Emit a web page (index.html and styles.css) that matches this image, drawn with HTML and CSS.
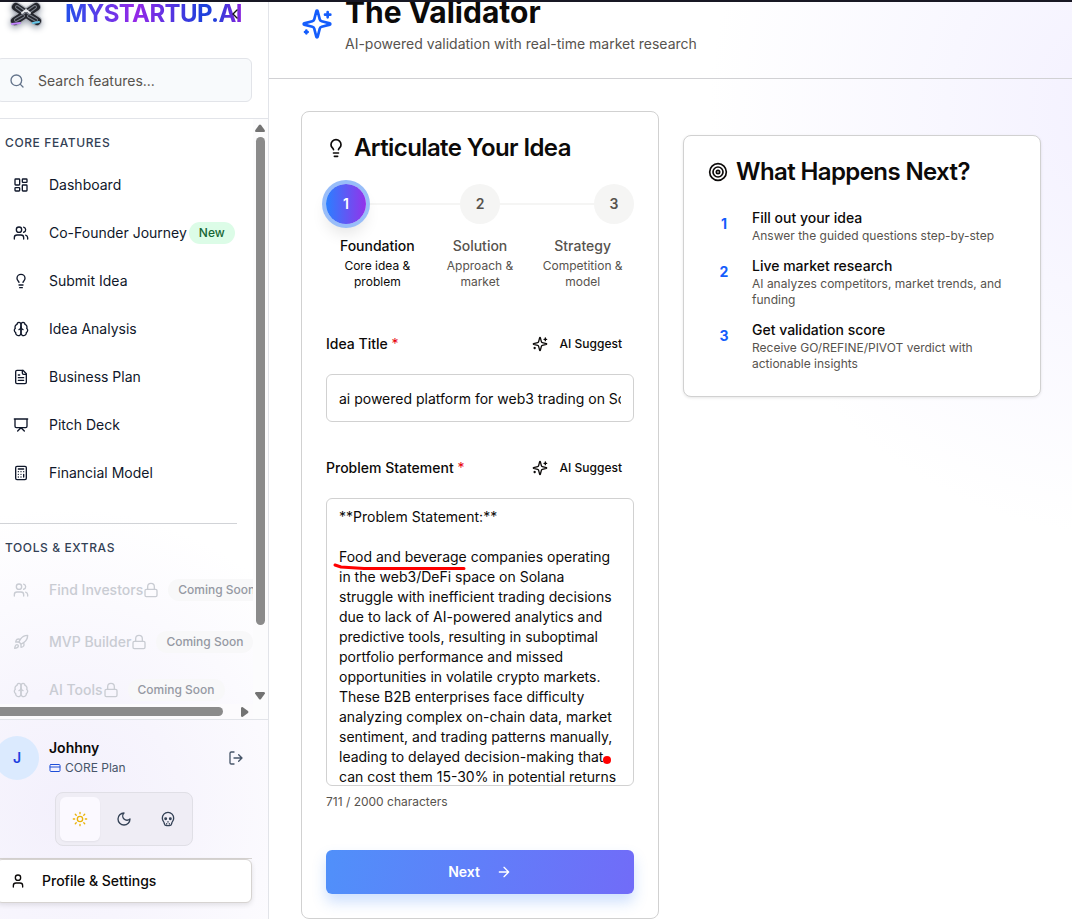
FILE: index.html
```html
<!DOCTYPE html>
<html lang="en">
<head>
<meta charset="utf-8">
<title>The Validator</title>
<link rel="stylesheet" href="styles.css">
</head>
<body>
<svg class="sprite" aria-hidden="true">
  <symbol id="users" viewBox="0 0 24 24"><path d="M16 21v-2a4 4 0 0 0-4-4H6a4 4 0 0 0-4 4v2"/><circle cx="9" cy="7" r="4"/><path d="M22 21v-2a4 4 0 0 0-3-3.87M16 3.13a4 4 0 0 1 0 7.75"/></symbol>
  <symbol id="bulb" viewBox="0 0 24 24"><path d="M15 14c.2-1 .7-1.7 1.5-2.5 1-.9 1.5-2.2 1.5-3.5A6 6 0 0 0 6 8c0 1 .2 2.2 1.5 3.5.7.7 1.3 1.5 1.5 2.5M9 18h6M10 22h4"/></symbol>
  <symbol id="brain" viewBox="0 0 24 24"><path d="M12 5a3 3 0 1 0-5.997.125 4 4 0 0 0-2.526 5.77 4 4 0 0 0 .556 6.588A4 4 0 1 0 12 18Z"/><path d="M12 5a3 3 0 1 1 5.997.125 4 4 0 0 1 2.526 5.77 4 4 0 0 1-.556 6.588A4 4 0 1 1 12 18Z"/><path d="M15 13a4.5 4.5 0 0 1-3-4 4.5 4.5 0 0 1-3 4"/></symbol>
  <symbol id="lock" viewBox="0 0 24 24"><rect x="3" y="11" width="18" height="11" rx="2"/><path d="M7 11V7a5 5 0 0 1 10 0v4"/></symbol>
  <symbol id="sparkles" viewBox="0 0 24 24"><path d="M9.937 15.5A2 2 0 0 0 8.5 14.063l-6.135-1.582a.5.5 0 0 1 0-.962L8.5 9.936A2 2 0 0 0 9.937 8.5l1.582-6.135a.5.5 0 0 1 .963 0L14.063 8.5A2 2 0 0 0 15.5 9.937l6.135 1.581a.5.5 0 0 1 0 .964L15.5 14.063a2 2 0 0 0-1.437 1.437l-1.582 6.135a.5.5 0 0 1-.963 0z"/><path d="M20 3v4M22 5h-4M4 17v2M5 18H3"/></symbol>
</svg>
<div class="window-edge"></div>
<div class="app">
  <aside class="sidebar">
    <div class="sidebar-top">
      <div class="brand">
        <svg class="brand-mark" viewBox="0 0 40 32" aria-hidden="true">
          <g fill="none" stroke-linecap="round">
            <path d="M10 7 31 21M30 7 9 21" stroke="#a9adb5" stroke-width="10"/>
            <path d="M10 7 31 21M30 7 9 21" stroke="#24262d" stroke-width="8"/>
            <path d="M11 7 18 12M29 7 22 12M10 20l7-4M30 20l-7-4" stroke="#777d88" stroke-width="4"/>
            <path d="M11 7 18 12M29 7 22 12M10 20l7-4M30 20l-7-4" stroke="#24262d" stroke-width="2"/>
            <path d="m6 24 8-1" stroke="#c084fc" stroke-width="2"/><path d="m27 23 6-1" stroke="#67c7e8" stroke-width="2"/>
            <path d="m16 13 4-3 4 3" stroke="#e5e7eb" stroke-width="2"/>
          </g>
        </svg>
        <span class="brand-name">MYSTARTUP.AI</span>
        <button class="collapse" aria-label="Collapse sidebar"><svg class="icon" viewBox="0 0 24 24"><path d="m15 18-6-6 6-6"/></svg></button>
      </div>
      <label class="search">
        <svg class="icon" viewBox="0 0 24 24"><circle cx="11" cy="11" r="8"/><path d="m21 21-4.3-4.3"/></svg>
        <input type="text" placeholder="Search features..." aria-label="Search features">
      </label>
    </div>
    <div class="nav-pane">
      <nav class="nav">
        <h2 class="nav-heading">CORE FEATURES</h2>
        <a class="nav-link" href="#"><svg class="icon" viewBox="0 0 24 24"><rect x="3" y="3" width="7" height="9" rx="1"/><rect x="14" y="3" width="7" height="5" rx="1"/><rect x="14" y="12" width="7" height="9" rx="1"/><rect x="3" y="16" width="7" height="5" rx="1"/></svg><span>Dashboard</span></a>
        <a class="nav-link" href="#"><svg class="icon"><use href="#users"/></svg><span>Co-Founder Journey</span><span class="pill pill-new">New</span></a>
        <a class="nav-link" href="#"><svg class="icon"><use href="#bulb"/></svg><span>Submit Idea</span></a>
        <a class="nav-link" href="#"><svg class="icon"><use href="#brain"/></svg><span>Idea Analysis</span></a>
        <a class="nav-link" href="#"><svg class="icon" viewBox="0 0 24 24"><path d="M15 2H6a2 2 0 0 0-2 2v16a2 2 0 0 0 2 2h12a2 2 0 0 0 2-2V7Z"/><path d="M14 2v4a2 2 0 0 0 2 2h4M10 9H8M16 13H8M16 17H8"/></svg><span>Business Plan</span></a>
        <a class="nav-link" href="#"><svg class="icon" viewBox="0 0 24 24"><path d="M2 3h20M21 3v11a2 2 0 0 1-2 2H5a2 2 0 0 1-2-2V3M7 21l5-5 5 5"/></svg><span>Pitch Deck</span></a>
        <a class="nav-link" href="#"><svg class="icon" viewBox="0 0 24 24"><rect x="4" y="2" width="16" height="20" rx="2"/><path d="M8 6h8M16 14v4M16 10h.01M12 10h.01M8 10h.01M12 14h.01M8 14h.01M12 18h.01M8 18h.01"/></svg><span>Financial Model</span></a>
        <hr class="nav-rule">
        <h2 class="nav-heading">TOOLS &amp; EXTRAS</h2>
        <a class="nav-link locked" href="#"><svg class="icon"><use href="#users"/></svg><span>Find Investors</span><svg class="icon"><use href="#lock"/></svg><span class="pill">Coming Soon</span></a>
        <a class="nav-link locked" href="#"><svg class="icon" viewBox="0 0 24 24"><path d="M4.5 16.5c-1.5 1.26-2 5-2 5s3.74-.5 5-2c.71-.84.7-2.13-.09-2.91a2.18 2.18 0 0 0-2.91-.09zM12 15l-3-3a22 22 0 0 1 2-3.950A12.880 12.880 0 0 1 22 2c0 2.720-.78 7.500-6 11a22.350 22.350 0 0 1-4 2z"/><path d="M9 12H4s.55-3.030 2-4c1.620-1.080 5 0 5 0M12 15v5s3.030-.55 4-2c1.080-1.620 0-5 0-5"/></svg><span>MVP Builder</span><svg class="icon"><use href="#lock"/></svg><span class="pill">Coming Soon</span></a>
        <a class="nav-link locked" href="#"><svg class="icon"><use href="#brain"/></svg><span>AI Tools</span><svg class="icon"><use href="#lock"/></svg><span class="pill">Coming Soon</span></a>
      </nav>
      <div class="bar-y" aria-hidden="true">
        <svg class="arrow" viewBox="0 0 10 8"><path d="M4 1Q5 0 6 1L10 6.500Q10 8 9 8H1Q0 8 0 6.500Z"/></svg><span class="thumb-y"></span><span class="gap-y"></span><svg class="arrow" viewBox="0 0 10 8"><path d="M4 7Q5 8 6 7L10 1.500Q10 0 9 0H1Q0 0 0 1.500Z"/></svg>
      </div>
      <div class="bar-x" aria-hidden="true">
        <span class="thumb-x"></span><svg class="arrow-x" viewBox="0 0 8 10"><path d="M7 4Q8 5 7 6L1.500 10Q0 10 0 9V1Q0 0 1.500 0Z"/></svg>
      </div>
    </div>
    <div class="account">
      <div class="user">
        <span class="avatar">J</span>
        <div class="user-text">
          <div class="user-name">Johhny</div>
          <div class="user-plan"><svg class="icon" viewBox="0 0 24 24"><rect x="2" y="5" width="20" height="14" rx="2"/><path d="M2 10h20"/></svg>CORE Plan</div>
        </div>
        <button class="logout" aria-label="Log out"><svg class="icon" viewBox="0 0 24 24"><path d="M9 21H5a2 2 0 0 1-2-2V5a2 2 0 0 1 2-2h4M16 17l5-5-5-5M21 12H9"/></svg></button>
      </div>
      <div class="themes">
        <button class="theme active" aria-label="Light"><svg class="icon" viewBox="0 0 24 24"><circle cx="12" cy="12" r="4"/><path d="M12 2v2M12 20v2M4.930 4.930l1.410 1.410M17.660 17.660l1.410 1.410M2 12h2M20 12h2M6.340 17.660l-1.410 1.410M19.070 4.930l-1.410 1.410"/></svg></button>
        <button class="theme" aria-label="Dark"><svg class="icon" viewBox="0 0 24 24"><path d="M12 3a6 6 0 0 0 9 9 9 9 0 1 1-9-9Z"/></svg></button>
        <button class="theme" aria-label="Skull"><svg class="icon" viewBox="0 0 24 24"><path d="M12 2a8.500 8.500 0 0 0-8.500 9c0 2 .5 3.600 1.800 5 .9 1 1 2 1.300 3.300C7 21.300 8.300 22 10 22h4c1.700 0 3-.7 3.400-2.700.3-1.300.4-2.300 1.300-3.300 1.300-1.400 1.800-3 1.800-5A8.500 8.500 0 0 0 12 2Z"/><circle cx="8.500" cy="11.500" r="1.200"/><circle cx="15.500" cy="11.500" r="1.200"/><path d="M12 16v.5M10 19v.5M14 19v.5"/></svg></button>
      </div>
      <div class="profile-row">
        <button class="profile"><svg class="icon" viewBox="0 0 24 24"><path d="M19 21v-2a4 4 0 0 0-4-4H9a4 4 0 0 0-4 4v2"/><circle cx="12" cy="7" r="4"/></svg>Profile &amp; Settings</button>
      </div>
    </div>
  </aside>
  <main class="main">
    <header class="page-head">
      <svg class="icon head-icon"><use href="#sparkles"/></svg>
      <div>
        <h1 class="title">The Validator</h1>
        <p class="subtitle">AI-powered validation with real-time market research</p>
      </div>
    </header>
    <div class="columns">
      <form class="card idea">
        <h2 class="card-title"><svg class="icon"><use href="#bulb"/></svg>Articulate Your Idea</h2>
        <div class="steps">
          <span class="dot current">1</span><span class="line"></span><span class="dot">2</span><span class="line"></span><span class="dot">3</span>
        </div>
        <div class="step-names">
          <div class="step-name current"><strong>Foundation</strong><span>Core idea &amp; problem</span></div>
          <div class="step-name"><strong>Solution</strong><span>Approach &amp; market</span></div>
          <div class="step-name"><strong>Strategy</strong><span>Competition &amp; model</span></div>
        </div>
        <div class="field-head">
          <label for="idea-title">Idea Title <span class="req">*</span></label>
          <button type="button" class="suggest"><svg class="icon"><use href="#sparkles"/></svg>AI Suggest</button>
        </div>
        <input class="control" id="idea-title" type="text" value="ai powered platform for web3 trading on Solana">
        <div class="field-head second">
          <label for="problem">Problem Statement <span class="req">*</span></label>
          <button type="button" class="suggest"><svg class="icon"><use href="#sparkles"/></svg>AI Suggest</button>
        </div>
        <div class="problem-wrap">
          <textarea class="control area" id="problem" spellcheck="false">**Problem Statement:**

Food and beverage companies operating in the web3/DeFi space on Solana struggle with inefficient trading decisions due to lack of AI-powered analytics and predictive tools, resulting in suboptimal portfolio performance and missed opportunities in volatile crypto markets. These B2B enterprises face difficulty analyzing complex on-chain data, market sentiment, and trading patterns manually, leading to delayed decision-making that can cost them 15-30% in potential returns</textarea>
          <svg class="marks" viewBox="0 0 308 288" aria-hidden="true"><path d="M9 67 15 69 38 70.500H138" fill="none" stroke="#f00" stroke-width="3" stroke-linecap="round" stroke-linejoin="round"/><circle cx="281" cy="262" r="4" fill="#f00"/></svg>
        </div>
        <p class="count">711 / 2000 characters</p>
        <button type="button" class="next">Next<svg class="icon" viewBox="0 0 24 24"><path d="M5 12h14M12 5l7 7-7 7"/></svg></button>
      </form>
      <section class="card after">
        <h2 class="card-title"><svg class="icon" viewBox="0 0 24 24"><circle cx="12" cy="12" r="10"/><circle cx="12" cy="12" r="6"/><circle cx="12" cy="12" r="2"/></svg>What Happens Next?</h2>
        <ol class="todo">
          <li><span class="num">1</span><div><strong>Fill out your idea</strong><p>Answer the guided questions step-by-step</p></div></li>
          <li><span class="num">2</span><div><strong>Live market research</strong><p>AI analyzes competitors, market trends, and funding</p></div></li>
          <li><span class="num">3</span><div><strong>Get validation score</strong><p>Receive GO/REFINE/PIVOT verdict with actionable insights</p></div></li>
        </ol>
      </section>
    </div>
  </main>
</div>
</body>
</html>
```
FILE: styles.css
```css
* { box-sizing: border-box; margin: 0; }
body {
  font: 14px/20px Inter, "Liberation Sans", sans-serif;
  color: #0c0a09;
  background: #fff;
  overflow: hidden;
}
button, input, textarea { font: inherit; color: inherit; }
button { border: 0; padding: 0; background: none; display: flex; align-items: center; justify-content: center; }
a { color: inherit; text-decoration: none; }
.sprite { position: absolute; width: 0; height: 0; }
.icon { width: 16px; height: 16px; flex: none; fill: none; stroke: currentColor; stroke-width: 2; stroke-linecap: round; stroke-linejoin: round; }
.window-edge { position: fixed; inset: 0 0 auto; height: 2px; background: #181824; z-index: 5; }
.app { display: grid; grid-template-columns: 269px minmax(0, 1fr); height: 100vh; }

/* Sidebar */
.sidebar {
  margin-left: -20px;
  min-height: 0;
  display: flex;
  flex-direction: column;
  border-right: 1px solid #e2e4e9;
  background: radial-gradient(circle at 30% 88%, #f3f0fc 0, #f7f5fd 14%, #fff 36%);
}
.sidebar-top { padding: 0 16px 16px; border-bottom: 1px solid #e2e4e9; }
.brand { height: 58px; display: flex; align-items: flex-start; position: relative; }
.brand-mark { width: 42px; height: 32px; margin: 0 18px 0 9px; filter: drop-shadow(0 2px 3px #9ca3af); }
.brand-name {
  font-size: 24px; line-height: 28px; font-weight: 700; letter-spacing: -0.025em;
  color: transparent;
  background: linear-gradient(90deg, #2350ea, #9528e8 40%, #1d40dc 78%, #2440dc 85%, #8b22dc);
  -webkit-background-clip: text; background-clip: text;
}
.collapse { position: absolute; right: 9px; top: 6px; color: #111; }
.search {
  display: flex; align-items: center; gap: 13px; height: 44px; padding: 1px 12px 0;
  border: 1px solid #e2e4e9; border-radius: 6px; background: #f8fafc; color: #64748b;
}
.search input { flex: 1; min-width: 0; border: 0; padding: 0; background: none; outline: 0; }
.search input::placeholder { color: #57534e; opacity: 1; }
.nav-pane { flex: 1; min-height: 0; display: grid; grid-template: minmax(0, 1fr) 15px / minmax(0, 1fr) 15px; }
.nav { overflow: hidden; padding: 16px 16px 0; }
.nav-heading { font-size: 12px; line-height: 16px; font-weight: 500; letter-spacing: 0.05em; color: #334155; padding-left: 9px; margin-bottom: 10px; }
.nav-link { display: flex; align-items: center; height: 48px; padding-left: 17px; color: #0f172a; white-space: nowrap; }
.nav-link > .icon:first-child { margin-right: 20px; }
.nav-link.locked { height: 52px; color: #c9ccd3; font-weight: 500; }
.nav-link.locked:last-child { height: 44px; }
.nav-rule { border: 0; border-top: 1px solid #d1d3d7; margin: 26px 0 16px; }
.nav-rule + .nav-heading { margin-bottom: 8px; }
.pill { font-size: 12px; line-height: 22px; font-weight: 500; padding: 0 10px; margin-left: 9px; border-radius: 11px; background: #f8f8f9; color: #9599a3; }
.pill-new { margin-left: 2px; background: #dcfce7; color: #166534; }
.bar-y { grid-row: span 2; display: flex; flex-direction: column; align-items: center; padding: 5px 1px 19px 0; gap: 5px; background: #fcfcfd; }
.arrow { width: 10px; height: 8px; fill: #737373; flex: none; }
.thumb-y { width: 9px; flex: 490; border-radius: 5px; background: #8b8b8b; }
.gap-y { flex: 57; }
.bar-x { grid-area: 2 / 1; display: flex; align-items: center; gap: 18px; padding: 0 4px 0 16px; background: #fcfbfd; }
.thumb-x { flex: 1; height: 9px; border-radius: 5px; background: #8b8b8b; }
.arrow-x { width: 8px; height: 10px; fill: #737373; flex: none; }
.account { padding: 16px; border-top: 1px solid #e2e4e9; }
.user { display: flex; align-items: center; }
.avatar { width: 44px; height: 44px; margin: 0 10px 0 -1px; border-radius: 50%; background: #dbeafe; color: #1d3fe0; font-weight: 600; line-height: 44px; text-align: center; }
.user-text { flex: 1; }
.user-name { font-weight: 600; }
.user-plan { display: flex; align-items: center; gap: 4px; font-size: 12px; line-height: 20px; color: #475569; }
.user-plan .icon { width: 12px; height: 12px; color: #1d4ed8; }
.logout { width: 32px; height: 32px; color: #475569; }
.themes { display: flex; gap: 4px; width: fit-content; margin: 12px auto; padding: 4px; border: 1px solid #e0dfe6; border-radius: 8px; background: #efedf5; }
.theme { width: 40px; height: 44px; border-radius: 6px; color: #334155; }
.theme.active { background: #fbf9ff; color: #eab308; box-shadow: 0 1px 2px #0000000d; }
.profile-row { border-top: 1px solid #d6d3d1; }
.profile { width: 100%; height: 44px; justify-content: flex-start; gap: 16px; padding: 0 13px; border: 1px solid #d6d3d1; border-radius: 6px; background: #fff; font-weight: 500; box-shadow: 0 2px 5px #0000001a; }

/* Main */
.main { min-width: 0; background: radial-gradient(circle at 108% 12%, #f3f0ff 0, #f8f7ff 16%, #fff 36%); }
.page-head { height: 79px; display: flex; gap: 12px; padding-left: 32px; border-bottom: 1px solid #d1d1d4; }
.head-icon { width: 32px; height: 32px; margin-top: 8px; color: #155dfc; }
.title { font-size: 30px; line-height: 24px; font-weight: 700; }
.subtitle { line-height: 20px; margin-top: 10px; color: #57534e; }
.columns { display: grid; grid-template-columns: repeat(2, minmax(0, 1fr)); gap: 24px; align-items: start; padding: 32px 31px 0 32px; }
.card { padding: 24px; border: 1px solid #d1d1d1; border-radius: 8px; background: #fff; }
.after { margin-top: 24px; box-shadow: 0 1px 3px #0000001a; }
.card-title { display: flex; align-items: center; gap: 8px; font-size: 24px; line-height: 24px; font-weight: 600; letter-spacing: -0.025em; white-space: nowrap; }
.card-title .icon { width: 20px; height: 20px; }
.steps { display: flex; align-items: center; margin-top: 24px; }
.dot { width: 40px; height: 40px; border-radius: 50%; background: #f5f5f4; color: #57534e; line-height: 40px; text-align: center; font-weight: 600; }
.dot.current { position: relative; color: #fff; background: linear-gradient(90deg, #2b7fff, #9333ea); box-shadow: 0 0 0 4px #98bdf9, 0 10px 15px #0000001a; }
.line { flex: 1; height: 2px; background: #f5f5f4; }
.step-names { display: grid; grid-template-columns: repeat(3, 1fr); margin-top: 12px; text-align: center; color: #57534e; }
.step-name { padding: 0 8px; }
.step-name strong { display: block; font-weight: 500; margin-bottom: 2px; }
.step-name span { display: block; font-size: 12px; line-height: 16px; }
.step-name.current { color: #0c0a09; }
.field-head { display: flex; align-items: center; justify-content: space-between; height: 36px; margin: 36px 0 12px; font-weight: 500; }
.field-head.second { margin-top: 28px; }
.req { color: #e7000b; font-weight: 400; }
.suggest { height: 36px; gap: 12px; padding: 0 12px; font-size: 12px; font-weight: 500; }
.control { display: block; width: 100%; height: 48px; padding: 0 12px; border: 1px solid #d1d1d1; border-radius: 6px; background: #fff; outline: 0; }
.area { height: 288px; padding: 8px 12px; resize: none; overflow: hidden; }
.problem-wrap { position: relative; }
.marks { position: absolute; left: 0; top: 0; width: 308px; height: 288px; pointer-events: none; }
.count { margin-top: 8px; font-size: 12px; line-height: 16px; color: #57534e; }
.next { width: 100%; height: 44px; margin-top: 40px; gap: 16px; border-radius: 6px; color: #fff; font-weight: 600; background: linear-gradient(100deg, #5090fa, #716cf8); box-shadow: 0 8px 14px #3b82f640; }
.todo { list-style: none; padding: 0; margin-top: 24px; display: grid; gap: 12px; }
.todo li { display: grid; grid-template-columns: 32px minmax(0, 1fr); gap: 12px; }
.num { line-height: 32px; text-align: center; font-weight: 700; color: #155dfc; }
.todo strong { display: block; font-weight: 500; }
.todo p { font-size: 12px; line-height: 16px; color: #57534e; }
```
